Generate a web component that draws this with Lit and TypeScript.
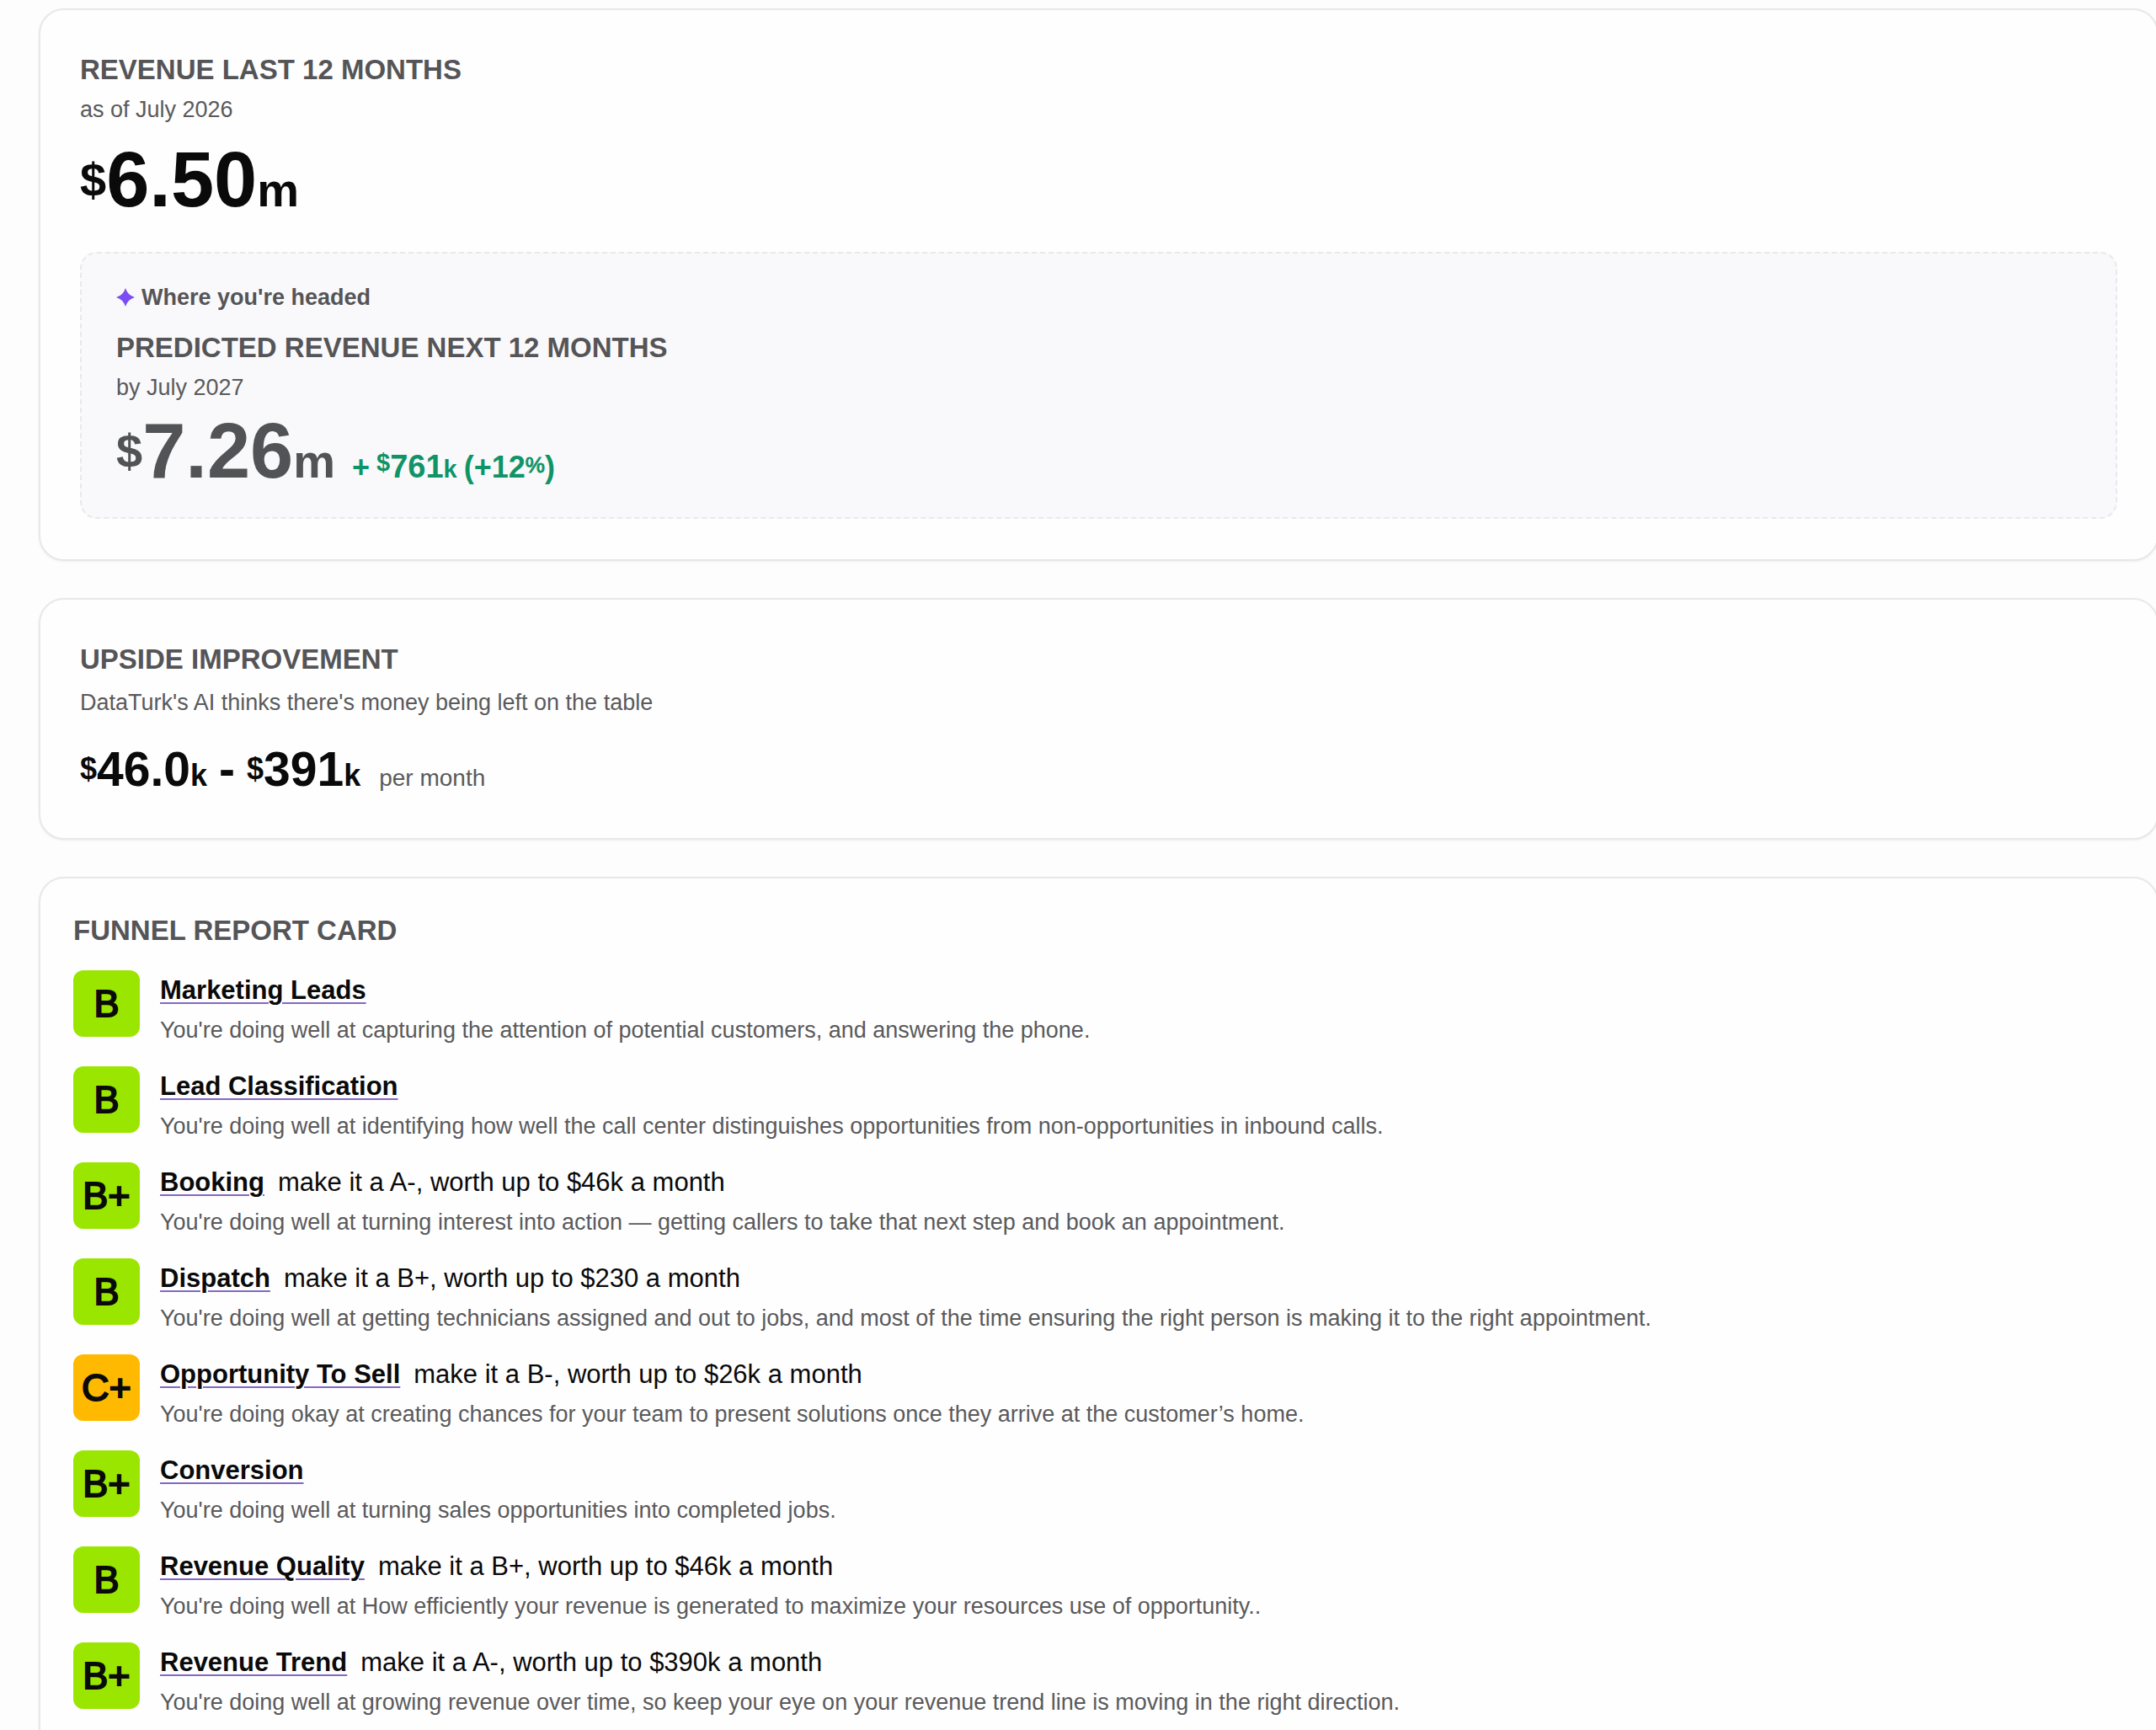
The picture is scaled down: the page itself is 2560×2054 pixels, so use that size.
import { LitElement, html, css, nothing } from "lit";
import { customElement, property } from "lit/decorators.js";

interface Stage {
  grade: string;
  name: string;
  goal?: string;
  note: string;
}

const STAGES: Stage[] = [
  {
    grade: "B",
    name: "Marketing Leads",
    note: "You're doing well at capturing the attention of potential customers, and answering the phone.",
  },
  {
    grade: "B",
    name: "Lead Classification",
    note: "You're doing well at identifying how well the call center distinguishes opportunities from non-opportunities in inbound calls.",
  },
  {
    grade: "B+",
    name: "Booking",
    goal: "make it a A-, worth up to $46k a month",
    note: "You're doing well at turning interest into action — getting callers to take that next step and book an appointment.",
  },
  {
    grade: "B",
    name: "Dispatch",
    goal: "make it a B+, worth up to $230 a month",
    note: "You're doing well at getting technicians assigned and out to jobs, and most of the time ensuring the right person is making it to the right appointment.",
  },
  {
    grade: "C+",
    name: "Opportunity To Sell",
    goal: "make it a B-, worth up to $26k a month",
    note: "You're doing okay at creating chances for your team to present solutions once they arrive at the customer’s home.",
  },
  {
    grade: "B+",
    name: "Conversion",
    note: "You're doing well at turning sales opportunities into completed jobs.",
  },
  {
    grade: "B",
    name: "Revenue Quality",
    goal: "make it a B+, worth up to $46k a month",
    note: "You're doing well at How efficiently your revenue is generated to maximize your resources use of opportunity..",
  },
  {
    grade: "B+",
    name: "Revenue Trend",
    goal: "make it a A-, worth up to $390k a month",
    note: "You're doing well at growing revenue over time, so keep your eye on your revenue trend line is moving in the right direction.",
  },
];

/* An amount with a smaller raised currency sign and a smaller unit letter. */
@customElement("money-figure")
class MoneyFigure extends LitElement {
  static styles = css`
    :host {
      display: block;
      white-space: nowrap;
    }
    .sign,
    .unit {
      font-size: var(--affix-size, 56px);
      line-height: 0;
    }
    .sign {
      vertical-align: var(--sign-rise, 12px);
    }
  `;
  @property() amount = "";
  @property() unit = "";

  render() {
    return html`<span class="sign">$</span><span>${this.amount}</span><span class="unit">${this.unit}</span>`;
  }
}

@customElement("funnel-row")
class FunnelRow extends LitElement {
  static styles = css`
    :host {
      display: flex;
      align-items: flex-start;
      gap: 24px;
    }
    .badge {
      flex: none;
      width: 79px;
      height: 79px;
      border-radius: 12px;
      display: grid;
      place-items: center;
      background: #9ae600;
      color: #0a0a0a;
      font-size: 45px;
      line-height: 48px;
      -webkit-text-stroke: 2px currentColor;
    }
    .badge.fair {
      background: #ffb900;
    }
    .head {
      display: flex;
      gap: 16px;
      font-size: 31px;
      line-height: 48px;
      color: #0a0a0a;
    }
    .name {
      color: inherit;
      font-weight: 700;
      text-decoration: underline;
      text-decoration-color: #8567c4;
      text-decoration-thickness: 2px;
      text-underline-offset: 4px;
    }
    .note {
      margin: 0;
      font-size: 27px;
      line-height: 46px;
      color: #5a5a5c;
    }
  `;
  @property({ attribute: false }) stage!: Stage;

  render() {
    const { grade, name, goal, note } = this.stage;
    return html`
      <span class="badge ${grade.startsWith("C") ? "fair" : "good"}">${grade}</span>
      <div>
        <div class="head">
          <a class="name" href="#">${name}</a>
          ${goal ? html`<span>${goal}</span>` : nothing}
        </div>
        <p class="note">${note}</p>
      </div>
    `;
  }
}

@customElement("app-root")
class AppRoot extends LitElement {
  static styles = css`
    :host {
      display: block;
      height: 100vh;
      overflow: hidden;
      background: #fdfdfd;
      font-family: "Liberation Sans", Arial, sans-serif;
      color: #0a0a0a;
    }
    .page {
      display: flex;
      flex-direction: column;
      gap: 44px;
      padding: 10px 0 0 46px;
      margin-right: -3px;
    }
    .card {
      background: #fefefe;
      border: 2px solid #e8e8e9;
      border-radius: 30px;
      padding: 47px 47px 48px;
      box-shadow: 0 1px 3px rgba(0, 0, 0, 0.06);
    }
    .card.report {
      padding: 38px 39px;
    }
    h2 {
      margin: 0;
      font-size: 33px;
      line-height: 48px;
      font-weight: 700;
      color: #555557;
    }
    .sub {
      margin: 0;
      font-size: 27px;
      line-height: 46px;
      color: #5a5a5c;
    }
    .upside .sub {
      margin-top: 4px;
    }
    .total {
      display: flex;
      align-items: baseline;
      gap: 20px;
      font-size: 92px;
      line-height: 104px;
      font-weight: 700;
    }
    .now {
      margin: 8px 0 34px;
    }
    .forecast {
      border: 2px dashed #e9e9ec;
      border-radius: 20px;
      background: #f9f9fb;
      padding: 32px 41px 27px;
    }
    .forecast .total {
      color: #525356;
    }
    .tag {
      display: flex;
      align-items: center;
      gap: 8px;
      margin: 0 0 16px;
      font-size: 27px;
      line-height: 40px;
      font-weight: 700;
      color: #555557;
    }
    .spark {
      width: 22px;
      height: 22px;
      fill: #7c4df0;
    }
    .gain {
      --affix-size: 29px;
      --sign-rise: 8px;
      display: flex;
      align-items: baseline;
      gap: 8px;
      font-size: 36px;
      line-height: 1;
      color: #0f9467;
    }
    .gain money-figure {
      font-size: 38px;
    }
    .percent {
      font-size: 26px;
      font-weight: 400;
      -webkit-text-stroke: 1px currentColor;
      vertical-align: 6px;
      line-height: 0;
    }
    .range {
      --affix-size: 36px;
      --sign-rise: 8px;
      display: flex;
      align-items: baseline;
      gap: 14px;
      margin-top: 22px;
      font-size: 57px;
      line-height: 68px;
      font-weight: 700;
    }
    .per {
      margin-left: 8px;
      font-size: 28px;
      line-height: 1;
      font-weight: 400;
      color: #5a5a5c;
    }
    .rows {
      display: flex;
      flex-direction: column;
      gap: 20px;
      margin-top: 23px;
    }
  `;

  render() {
    return html`
      <main class="page">
        <section class="card">
          <h2>REVENUE LAST 12 MONTHS</h2>
          <p class="sub">as of July 2026</p>
          <div class="total now"><money-figure amount="6.50" unit="m"></money-figure></div>
          <div class="forecast">
            <p class="tag">
              <svg class="spark" viewBox="0 0 22 22" aria-hidden="true">
                <path d="M11 0Q13.500 8.500 22 11Q13.500 13.500 11 22Q8.500 13.500 0 11Q8.500 8.500 11 0Z" />
              </svg>
              Where you're headed
            </p>
            <h2>PREDICTED REVENUE NEXT 12 MONTHS</h2>
            <p class="sub">by July 2027</p>
            <div class="total">
              <money-figure amount="7.26" unit="m"></money-figure>
              <span class="gain">
                <span>+</span>
                <money-figure amount="761" unit="k"></money-figure>
                <span>(+12<span class="percent">%</span>)</span>
              </span>
            </div>
          </div>
        </section>
        <section class="card upside">
          <h2>UPSIDE IMPROVEMENT</h2>
          <p class="sub">DataTurk's AI thinks there's money being left on the table</p>
          <div class="range">
            <money-figure amount="46.0" unit="k"></money-figure>
            <span>-</span>
            <money-figure amount="391" unit="k"></money-figure>
            <span class="per">per month</span>
          </div>
        </section>
        <section class="card report">
          <h2>FUNNEL REPORT CARD</h2>
          <div class="rows">
            ${STAGES.map((stage) => html`<funnel-row .stage=${stage}></funnel-row>`)}
          </div>
        </section>
      </main>
    `;
  }
}
